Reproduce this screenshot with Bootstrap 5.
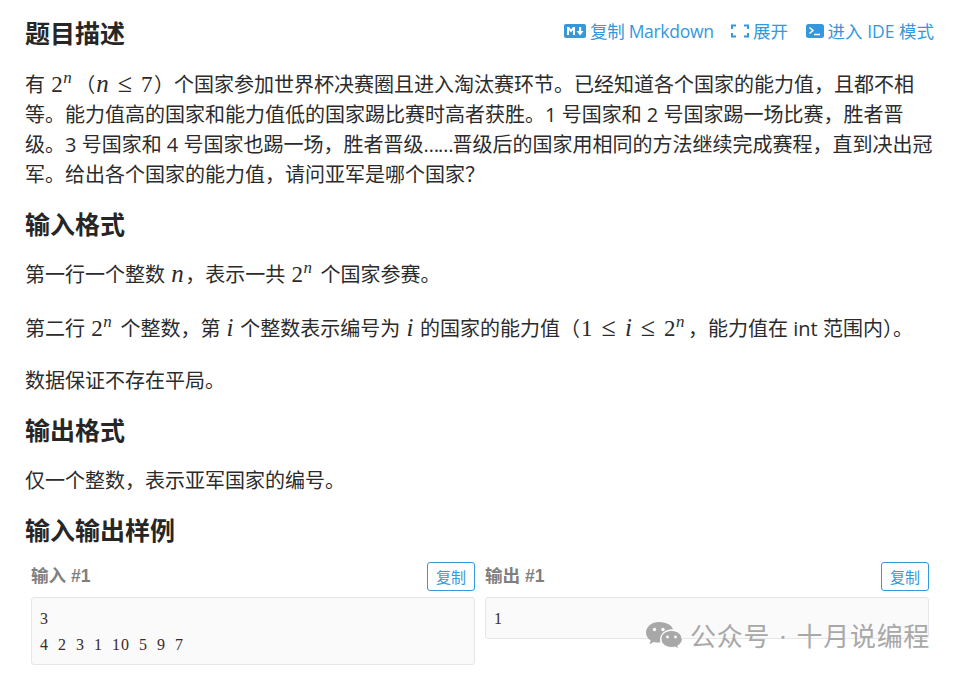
<!DOCTYPE html>
<html lang="zh-CN">
<head>
    <meta charset="UTF-8">
    <title>题目描述</title>
    <link href="https://cdn.jsdelivr.net/npm/bootstrap@5.3.2/dist/css/bootstrap.min.css" rel="stylesheet">
    <style>
        body {
            font-family: "Open Sans", "Noto Sans CJK SC", sans-serif;
            font-size: 20px;
            line-height: 30px;
            color: #2b2b2b;
            background: #fff;
            overflow: hidden;
        }
        .page-wrap { width: 960px; height: 675px; padding: 14px 26px 0 25px; position: relative; overflow: hidden; }
        .sec-title { font-size: 25px; line-height: 36px; font-weight: 700; margin: 0; font-family: "Noto Sans CJK SC", sans-serif; color: #262626; }
        .intro-text { margin: 20px 0 15px; }
        .ell { letter-spacing: -1px; }
        .sec-text { margin: 19px 0 15px; }
        .sec-text.gap-a { margin-bottom: 24px; }
        .sec-text.gap-b { margin-top: 0; margin-bottom: 22px; }
        .sec-text.gap-c { margin-top: 0; }
        .sec-text.gap-d { margin-bottom: 15px; }
        .top-links { font-size: 17.5px; line-height: 24px; color: #3498db; margin-top: -3px; column-gap: 17.5px; }
        .top-links svg { display: block; }
        .md-text { letter-spacing: -.3px; }
        .mth { font-family: "Liberation Serif", serif; font-size: 23px; line-height: 1; white-space: nowrap; letter-spacing: .5px; padding: 0 1px; }
        .mth i { font-style: italic; font-size: 25px; }
        .mth sup { font-size: 17px; font-style: italic; top: -0.55em; line-height: 0; padding-right: 2px; }
        .mth b { font-weight: 400; font-size: 26px; margin: 0 8.5px; line-height: 1; }
        .sample-row { grid-template-columns: 444px 444px; column-gap: 10px; padding-left: 6px; margin-top: 15px; }
        .sample-label { font-size: 17.6px; font-weight: 700; color: #7f7f7f; font-family: "Liberation Sans", "Noto Sans CJK SC", sans-serif; margin-top: -2px; }
        .copy-btn { width: 48px; height: 29px; font-size: 15px; line-height: 20px; color: #3498db; border: 1px solid #3498db; border-radius: 3px; background: #fff; padding: 0; }
        .sample-box { background: #fafafa; border: 1px solid #e6e6e6; border-radius: 3px; margin: 6px 0 0; padding: 8px 8px 6px; font-family: "Liberation Serif", serif; font-size: 16px; line-height: 26px; color: #3b2b2b; letter-spacing: 1px; word-spacing: 4px; overflow: hidden; }
        .mark-overlay { position: absolute; left: 646px; top: 620px; color: #a8a8a8; font-size: 26px; line-height: 32px; letter-spacing: .7px; word-spacing: 2px; }
    </style>
</head>
<body>
    <div class="page-wrap">
        <div class="d-flex justify-content-between align-items-center">
            <h2 class="sec-title">题目描述</h2>
            <div class="top-links d-flex align-items-center">
                <span class="md-text d-flex align-items-center gap-1">
                    <svg width="22" height="14" viewBox="0 0 22 14"><rect width="22" height="14" rx="2" fill="#3498db"/><path d="M3 11V3h2l2 2.600L9 3h2v8H9V6L7 8.400 5 6v5zM15 3h2.200v4H19.500l-3.400 4.400L12.700 7H15z" fill="#fff"/></svg>
                    复制 Markdown
                </span>
                <span class="d-flex align-items-center gap-1">
                    <svg width="18" height="14" viewBox="0 0 18 14"><path d="M1 5V1.500h4M13 1.500h4V5M17 9v3.500h-4M5 12.500H1V9" fill="none" stroke="#3498db" stroke-width="2"/></svg>
                    展开
                </span>
                <span class="d-flex align-items-center gap-1">
                    <svg width="18" height="14" viewBox="0 0 18 14"><rect width="18" height="14" rx="2.500" fill="#3498db"/><path d="M3.500 3.500 7 6.500l-3.500 3M8 10.500h6" fill="none" stroke="#fff" stroke-width="1.500"/></svg>
                    进入 IDE 模式
                </span>
            </div>
        </div>

        <p class="intro-text">有 <span class="mth">2<sup>n</sup></span>（<span class="mth"><i>n</i><b>≤</b>7</span>）个国家参加世界杯决赛圈且进入淘汰赛环节。已经知道各个国家的能力值，且都不相等。能力值高的国家和能力值低的国家踢比赛时高者获胜。1 号国家和 2 号国家踢一场比赛，胜者晋级。3 号国家和 4 号国家也踢一场，胜者晋级<span class="ell">……</span>晋级后的国家用相同的方法继续完成赛程，直到决出冠军。给出各个国家的能力值，请问亚军是哪个国家？</p>

        <h2 class="sec-title">输入格式</h2>
        <p class="sec-text gap-a">第一行一个整数 <span class="mth"><i>n</i></span>，表示一共 <span class="mth">2<sup>n</sup></span> 个国家参赛。</p>
        <p class="sec-text gap-b">第二行 <span class="mth">2<sup>n</sup></span> 个整数，第 <span class="mth"><i>i</i></span> 个整数表示编号为 <span class="mth"><i>i</i></span> 的国家的能力值（<span class="mth">1<b>≤</b><i>i</i><b>≤</b>2<sup>n</sup></span>，能力值在 int 范围内）。</p>
        <p class="sec-text gap-c">数据保证不存在平局。</p>

        <h2 class="sec-title">输出格式</h2>
        <p class="sec-text gap-d">仅一个整数，表示亚军国家的编号。</p>

        <h2 class="sec-title">输入输出样例</h2>
        <div class="sample-row d-grid">
            <div>
                <div class="d-flex justify-content-between align-items-center">
                    <span class="sample-label">输入 #1</span>
                    <button class="copy-btn" type="button">复制</button>
                </div>
                <pre class="sample-box">3
4 2 3 1 10 5 9 7</pre>
            </div>
            <div>
                <div class="d-flex justify-content-between align-items-center">
                    <span class="sample-label">输出 #1</span>
                    <button class="copy-btn" type="button">复制</button>
                </div>
                <pre class="sample-box">1</pre>
            </div>
        </div>

        <div class="mark-overlay d-flex align-items-center gap-2">
            <svg width="36" height="29" viewBox="0 0 36 29"><path d="M13 0C5.800 0 0 4.700 0 10.500c0 3.300 1.800 6.100 4.700 8l-1.200 3.700 4.300-2.300c1.600.5 3.400.7 5.200.7.500 0 .9 0 1.400-.1-.3-1-.4-2-.4-3 0-5.700 5.400-10.300 12-10.300h1C25.700 3 19.900 0 13 0z" fill="#a8a8a8"/><path d="M36 17c0-4.700-4.600-8.500-10.500-8.500S15 12.300 15 17s4.700 8.500 10.500 8.500c1.300 0 2.500-.2 3.700-.5l3.500 2-.9-3.200c2.800-1.800 4.700-4.400 4.700-6.800z" fill="#a8a8a8" stroke="#fff" stroke-width="1"/><circle cx="8.500" cy="7.500" r="1.700" fill="#fff"/><circle cx="17" cy="7.500" r="1.700" fill="#fff"/><circle cx="21.500" cy="15" r="1.400" fill="#fff"/><circle cx="29.500" cy="15" r="1.400" fill="#fff"/></svg>
            <span>公众号 · 十月说编程</span>
        </div>
    </div>
</body>
</html>
